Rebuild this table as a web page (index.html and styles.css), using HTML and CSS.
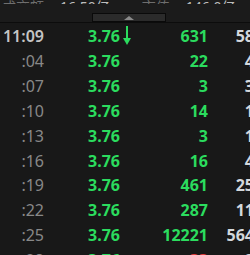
FILE: index.html
```html
<!DOCTYPE html>
<html>
<head>
<meta charset="utf-8">
<link rel="stylesheet" href="styles.css">
</head>
<body>
<div class="top">
  <div class="summary">
    <span class="lbl">成交额</span><span class="val">16.50亿</span>
    <span class="lbl">市值</span><span class="val">146.0亿</span>
  </div>
  <div class="handle-wrap"><div class="handle"><span class="tri"></span></div></div>
</div>
<div class="ticks">
  <div class="row"><span class="t first">11:09</span><span class="p">3.76</span><span class="a"><svg class="arrow" width="10" height="20" viewBox="0 0 10 20"><rect x="4" y="0" width="2" height="17" fill="#2bdc5e"/><path d="M1 12 L5 19 L9 12 Z" fill="#2bdc5e"/></svg></span><span class="v">631</span><span class="n">58</span></div>
  <div class="row"><span class="t">:04</span><span class="p">3.76</span><span class="a"></span><span class="v">22</span><span class="n">4</span></div>
  <div class="row"><span class="t">:07</span><span class="p">3.76</span><span class="a"></span><span class="v">3</span><span class="n">3</span></div>
  <div class="row"><span class="t">:10</span><span class="p">3.76</span><span class="a"></span><span class="v">14</span><span class="n">1</span></div>
  <div class="row"><span class="t">:13</span><span class="p">3.76</span><span class="a"></span><span class="v">3</span><span class="n">1</span></div>
  <div class="row"><span class="t">:16</span><span class="p">3.76</span><span class="a"></span><span class="v">16</span><span class="n">4</span></div>
  <div class="row"><span class="t">:19</span><span class="p">3.76</span><span class="a"></span><span class="v">461</span><span class="n">25</span></div>
  <div class="row"><span class="t">:22</span><span class="p">3.76</span><span class="a"></span><span class="v">287</span><span class="n">11</span></div>
  <div class="row"><span class="t">:25</span><span class="p">3.76</span><span class="a"></span><span class="v">12221</span><span class="n">564</span></div>
  <div class="row"><span class="t">:28</span><span class="p">3.76</span><span class="a"></span><span class="v red">33</span><span class="n">2</span></div>
</div>
</body>
</html>
```

FILE: styles.css
```css
html, body {
  margin: 0;
  padding: 0;
  background: #181818;
  overflow: hidden;
  width: 250px;
  height: 255px;
  font-family: "Noto Sans", "Noto Sans CJK SC", sans-serif;
}
.top {
  height: 22px;
  background: #1b1b1b;
  border-bottom: 1px solid #0c0c0c;
}
.summary {
  height: 4px;
  overflow: hidden;
  display: flex;
  align-items: flex-end;
  font-size: 14px;
  line-height: 14px;
  white-space: nowrap;
}
.summary span {
  display: block;
  margin-bottom: -10px;
}
.lbl { color: #6e6e6e; margin-left: 2px; }
.val { color: #bdbdbd; margin-left: 16px; margin-right: 30px; }
.handle-wrap {
  display: flex;
  justify-content: center;
  padding-top: 9px;
  padding-left: 8px;
}
.handle {
  width: 72px;
  height: 7px;
  background: #2b2b2b;
  border: 1px solid #0a0a0a;
  display: flex;
  justify-content: center;
  align-items: center;
}
.tri {
  width: 0;
  height: 0;
  border-left: 5px solid transparent;
  border-right: 5px solid transparent;
  border-bottom: 4px solid #8a8a8a;
}
.ticks {
  padding-top: 1px;
}
.row {
  display: grid;
  grid-template-columns: 44px 76px 12px 76px 46px;
  height: 24.85px;
  align-items: center;
  font-size: 16px;
  white-space: nowrap;
}
.t {
  text-align: right;
  color: #888;
  font-weight: 400;
}
.t.first {
  color: #c4c4c4;
  font-weight: 600;
}
.p {
  text-align: right;
  color: #2bdc5e;
  font-weight: 700;
}
.a {
  display: flex;
  justify-content: center;
  padding-left: 2px;
}
.arrow {
  display: block;
  width: 10px;
  height: 20px;
  flex: none;
}
.v {
  text-align: right;
  color: #2bdc5e;
  font-weight: 700;
}
.v.red { color: #e23b3b; }
.n {
  text-align: right;
  color: #d4d8dc;
  font-weight: 700;
}
```
